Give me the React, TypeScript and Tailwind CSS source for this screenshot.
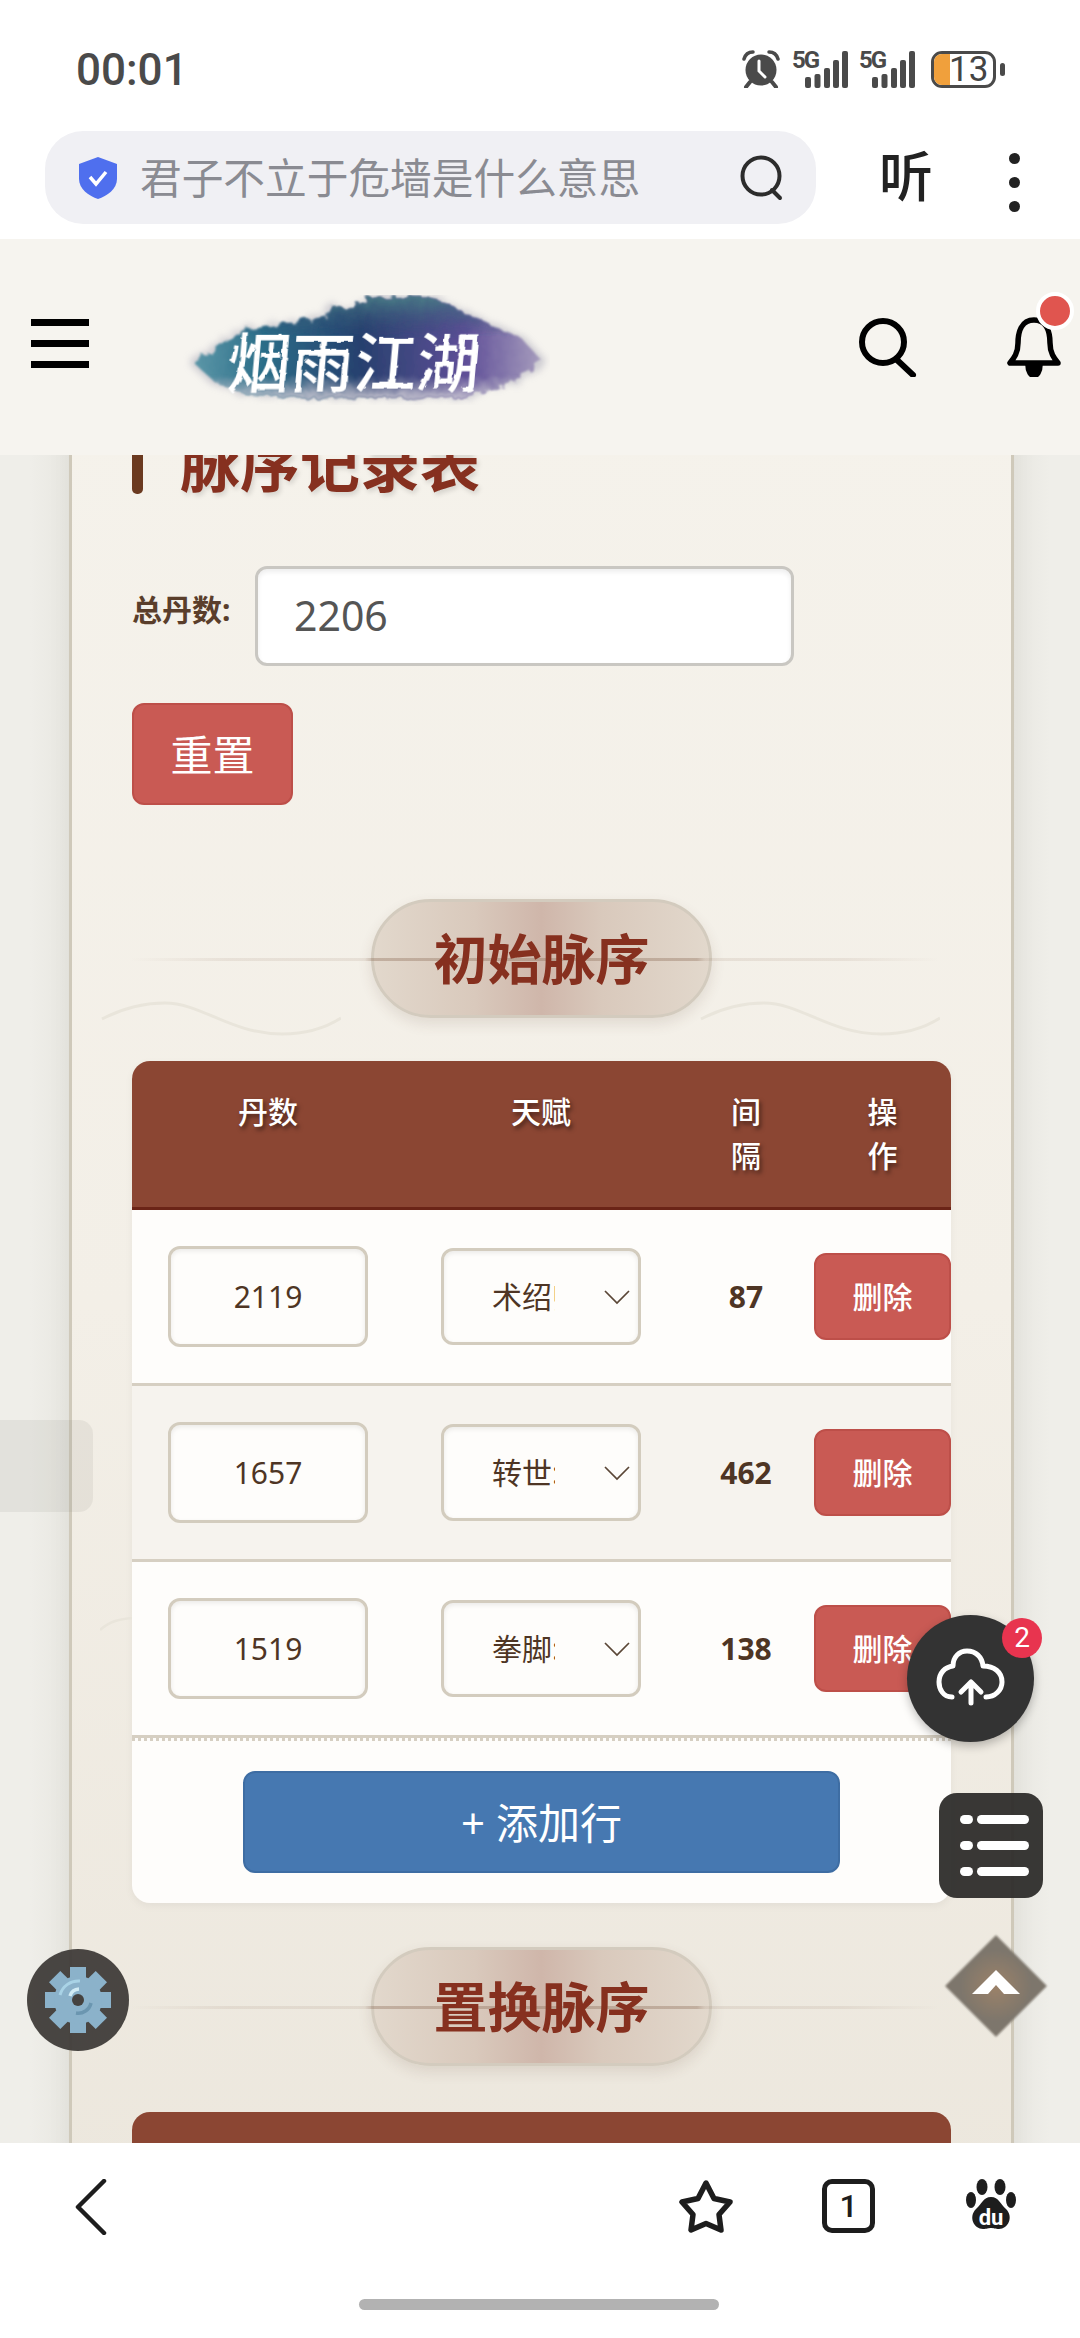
/* ─────────────────────────────────────────────────────
 *  脉序记录表 — pulse order table inside the mobile browser shell.
 *
 *  Browser chrome top and bottom, site header, then a card
 *  with the total input and the editable table sections.
 * ───────────────────────────────────────────────────── */

const ROWS = [
  { dan: '2119', talent: '术绍师', gap: '87' },
  { dan: '1657', talent: '转世:', gap: '462' },
  { dan: '1519', talent: '拳脚:', gap: '138' },
];

/* ── Status bar icons ──────────────────────────────── */

function Signal() {
  return (
    <div className="relative h-[38px] w-[56px]">
      <svg viewBox="0 0 56 38" className="absolute inset-0 h-full w-full" fill="#4a4a4a">
        <rect x="13" y="27" width="6" height="11" rx="2" />
        <rect x="22.5" y="24" width="6" height="14" rx="2" />
        <rect x="32" y="18" width="6" height="20" rx="2" />
        <rect x="41" y="10" width="6" height="28" rx="2" />
        <rect x="50" y="1" width="6" height="37" rx="2" />
      </svg>
      <span className="absolute left-0 top-[-2px] text-[24px] leading-[24px] font-bold tracking-[-2px] text-[#4a4a4a] font-['Roboto',sans-serif]">
        5G
      </span>
    </div>
  );
}

function StatusIcons() {
  return (
    <div className="flex items-center">
      <svg viewBox="0 0 38 38" className="mr-[12px] h-[38px] w-[38px]">
        <circle cx="19" cy="20" r="15.5" fill="#4a4a4a" />
        <path d="M2 9 Q4 2 11 2 M36 9 Q34 2 27 2" stroke="#4a4a4a" strokeWidth="3.5" fill="none" strokeLinecap="round" />
        <path d="M8 32 L4 37 M30 32 L34 37" stroke="#4a4a4a" strokeWidth="4" strokeLinecap="round" />
        <path d="M17 11 V21 L23 27" stroke="#fff" strokeWidth="3" fill="none" strokeLinecap="round" />
      </svg>
      <Signal />
      <div className="w-[11px]" />
      <Signal />
      <div className="ml-[16px] flex h-[37px] w-[65px] items-center rounded-[11px] border-[3px] border-[#4a4a4a]">
        <div className="h-full w-[16px] rounded-l-[8px] bg-[#f0a03c]" />
        <span className="ml-[-1px] text-[35px] leading-[31px] text-[#444] font-['Roboto',sans-serif]">13</span>
      </div>
      <div className="ml-[4px] h-[13px] w-[5px] rounded-full bg-[#4a4a4a]" />
    </div>
  );
}

/* ── Logo: ink wash blot with brush lettering ──────── */

const BLOT =
  'M14 68 L60 36 L122 26 L146 22 L152 10 L172 14 L190 3 L250 2 L272 12 L302 26 L342 44 L362 66 L336 86 L284 102 L200 103 L112 102 L66 99 L36 88 Z';

function Logo() {
  return (
    <svg viewBox="0 0 370 110" className="h-[110px] w-[370px]">
      <defs>
        <linearGradient id="ink" x1="0" y1="0" x2="1" y2="0">
          <stop offset="0" stopColor="#5c97a8" />
          <stop offset="0.2" stopColor="#2b6d88" />
          <stop offset="0.48" stopColor="#27406e" />
          <stop offset="0.78" stopColor="#5f4f98" />
          <stop offset="1" stopColor="#a79dbd" />
        </linearGradient>
        <linearGradient id="inkFade" x1="0" y1="0" x2="0" y2="1">
          <stop offset="0" stopColor="#4a7f86" stopOpacity="0.9" />
          <stop offset="0.4" stopColor="#2a4570" stopOpacity="0" />
          <stop offset="0.78" stopColor="#b7b4c4" stopOpacity="0" />
          <stop offset="1" stopColor="#cfccd6" stopOpacity="0.9" />
        </linearGradient>
        <filter id="haze" x="-15%" y="-30%" width="130%" height="160%">
          <feTurbulence type="fractalNoise" baseFrequency="0.1" numOctaves="3" seed="4" />
          <feDisplacementMap in="SourceGraphic" scale="12" />
          <feGaussianBlur stdDeviation="3.5" />
        </filter>
        <filter id="rough" x="-10%" y="-20%" width="120%" height="140%">
          <feTurbulence type="fractalNoise" baseFrequency="0.11" numOctaves="3" seed="4" />
          <feDisplacementMap in="SourceGraphic" scale="9" />
          <feGaussianBlur stdDeviation="1.1" />
        </filter>
        <filter id="brush" x="-5%" y="-10%" width="110%" height="120%">
          <feTurbulence type="fractalNoise" baseFrequency="0.1" numOctaves="2" seed="8" />
          <feDisplacementMap in="SourceGraphic" scale="3" />
        </filter>
      </defs>
      <path d={BLOT} fill="#bdbcc6" opacity="0.7" filter="url(#haze)" transform="translate(-6 -2) scale(1.03 1.03)" />
      <path d={BLOT} fill="url(#ink)" filter="url(#rough)" />
      <path d={BLOT} fill="url(#inkFade)" filter="url(#rough)" />
      <text
        x="46"
        y="92"
        fill="#fff"
        fontSize="64"
        fontWeight="500"
        textLength="252"
        lengthAdjust="spacingAndGlyphs"
        fontFamily="'Noto Sans CJK SC', sans-serif"
        transform="skewX(-5) translate(8 0)"
        filter="url(#brush)"
      >
        烟雨江湖
      </text>
    </svg>
  );
}

/* ── Section heading: pill over a hairline ─────────── */

function Wave({ className }: { className: string }) {
  return (
    <svg viewBox="0 0 240 36" className={className} fill="none">
      <path d="M1 18 Q32 2 64 2 C100 2 130 33 181 33 Q215 33 240 17" stroke="#e9e5db" strokeWidth="3" />
    </svg>
  );
}

function SectionTitle({ title, waves }: { title: string; waves?: boolean }) {
  return (
    <div className="relative flex justify-center">
      <div className="absolute left-[-2px] right-[11px] top-[59px] z-10 h-[3px] bg-[linear-gradient(90deg,rgba(150,120,100,0),rgba(150,120,100,0.13)_12%,rgba(150,120,100,0.14)_29%,rgba(150,120,100,0.42)_30%,rgba(150,120,100,0.42)_70%,rgba(150,120,100,0.14)_71%,rgba(150,120,100,0.13)_88%,rgba(150,120,100,0))]" />
      {waves && (
        <>
          <Wave className="absolute left-[-31px] top-[102px] h-[36px] w-[240px]" />
          <Wave className="absolute right-[11px] top-[102px] h-[36px] w-[240px]" />
        </>
      )}
      <div className="relative flex h-[119px] w-[341px] items-center justify-center rounded-[60px] border-[3px] border-[#d3cbbe] bg-[linear-gradient(90deg,#e2d8cc,#d9c9bc_30%,#cfb6aa_50%,#d9c9bc_68%,#e2d8cc)] shadow-[0_6px_14px_rgba(90,60,40,0.12)]">
        <span className="relative z-20 text-[54px] leading-none font-bold text-[#86301f]">{title}</span>
      </div>
    </div>
  );
}

/* ── Table ─────────────────────────────────────────── */

function TableHead() {
  const cell = 'text-center text-[30px] leading-[44px] font-medium text-white [text-shadow:2px_3px_4px_rgba(0,0,0,0.5)]';
  return (
    <div className="grid h-[149px] grid-cols-[272px_274px_136px_137px] border-b-[3px] border-[#6b2417] bg-[#8b4633] pt-[29px]">
      <div className={cell}>丹数</div>
      <div className={cell}>天赋</div>
      <div className={cell}>
        间<br />隔
      </div>
      <div className={cell}>
        操<br />作
      </div>
    </div>
  );
}

function TableRow({ row, striped }: { row: (typeof ROWS)[number]; striped: boolean }) {
  return (
    <div
      className={`grid h-[176px] grid-cols-[272px_274px_136px_137px] items-center border-b-[3px] border-[#d6cfc2] ${
        striped ? 'bg-[#f6f3ee]' : 'bg-[#fefdfb]'
      }`}
    >
      <div className="flex justify-center">
        <div className="flex h-[101px] w-[200px] items-center justify-center rounded-[12px] border-[3px] border-[#d3ccbe] bg-[#fefdfb] text-[30px] text-[#4e3524] shadow-[inset_0_2px_5px_rgba(0,0,0,0.08)]">
          {row.dan}
        </div>
      </div>
      <div className="flex justify-center">
        <div className="relative flex h-[97px] w-[200px] items-center rounded-[12px] border-[3px] border-[#d3ccbe] bg-[#fefdfb] pl-[48px] shadow-[inset_0_2px_5px_rgba(0,0,0,0.08)]">
          <span className="w-[63px] overflow-hidden whitespace-nowrap text-[30px] text-[#4e3524]">{row.talent}</span>
          <svg viewBox="0 0 26 16" className="absolute right-[8px] top-[38px] h-[16px] w-[26px]" fill="none">
            <path d="M1 2 L13 14 L25 2" stroke="#5a4636" strokeWidth="1.7" />
          </svg>
        </div>
      </div>
      <div className="text-center text-[30px] font-bold text-[#4e3524]">{row.gap}</div>
      <div className="flex h-[87px] items-center justify-center rounded-[12px] border-[2px] border-[#bd4f49] bg-[#c95a54] text-[30px] font-medium text-white">
        删除
      </div>
    </div>
  );
}

/* ── Floating controls ─────────────────────────────── */

function Gear() {
  const teeth = [0, 45, 90, 135, 180, 225, 270, 315];
  return (
    <svg viewBox="0 0 66 66" className="h-[66px] w-[66px]">
      {teeth.map((a) => (
        <rect key={a} x="25" y="0" width="16" height="16" fill="#8bb2ca" transform={`rotate(${a} 33 33)`} />
      ))}
      <circle cx="33" cy="33" r="24" fill="#8bb2ca" />
      <path d="M15 28 A19 19 0 0 1 35 14" stroke="#a9d3e6" strokeWidth="3" fill="none" />
      <path d="M25 29 A10 10 0 0 1 34 22" stroke="#d2ecf5" strokeWidth="3.5" fill="none" />
      <path d="M46 36 A13 13 0 0 1 31 46" stroke="#6b96b0" strokeWidth="3.5" fill="none" />
      <circle cx="33" cy="33" r="6" fill="#45423f" />
    </svg>
  );
}

function FloatingControls() {
  return (
    <>
      <div className="absolute left-0 top-[1420px] h-[92px] w-[93px] rounded-r-[14px] bg-[rgba(120,120,110,0.1)]" />

      {/* Upload queue */}
      <div className="absolute left-[907px] top-[1615px] h-[127px] w-[127px] rounded-full bg-[#333] shadow-[0_4px_10px_rgba(0,0,0,0.25)]">
        <svg viewBox="0 0 127 127" className="h-full w-full" fill="none" stroke="#fff" strokeWidth="5" strokeLinecap="round" strokeLinejoin="round">
          <path d="M45 82 C36 82 32 74 32 67 C32 58 38 52 46 51 C46 42 52 36 60 36 C69 36 75 42 76 51 C87 51 95 57 95 67 C95 75 88 82 79 82" />
          <path d="M64 88 V68 M54 77 L64 67 L74 77" />
        </svg>
        <div className="absolute right-[-8px] top-[3px] flex h-[40px] w-[40px] items-center justify-center rounded-full bg-[#e8344f] text-[28px] leading-none text-white font-['Roboto',sans-serif]">
          2
        </div>
      </div>

      {/* Outline list */}
      <div className="absolute left-[939px] top-[1793px] flex h-[105px] w-[104px] flex-col justify-center gap-[17px] rounded-[18px] bg-[#2e2d2b]/95 pl-[21px]">
        {[0, 1, 2].map((i) => (
          <div key={i} className="flex items-center gap-[4px]">
            <div className="h-[9px] w-[13px] rounded-full bg-white" />
            <div className="h-[9px] w-[52px] rounded-full bg-white" />
          </div>
        ))}
      </div>

      {/* Back to top */}
      <div className="absolute left-[960px] top-[1950px] h-[72px] w-[72px] rotate-45 bg-[radial-gradient(circle,#9c8269,#7d766c_70%)] blur-[1px]" />
      <svg viewBox="0 0 48 24" className="absolute left-[972px] top-[1970px] h-[24px] w-[48px]" fill="#fff">
        <path d="M0 24 L24 0 L48 24 L32 24 L24 15 L16 24 Z" />
      </svg>

      {/* Settings */}
      <div className="absolute left-[27px] top-[1949px] flex h-[102px] w-[102px] items-center justify-center rounded-full bg-[#3f3c39]/95">
        <Gear />
      </div>
    </>
  );
}

/* ── Page ──────────────────────────────────────────── */

export default function App() {
  return (
    <div className="relative flex h-[2338px] w-[1080px] flex-col overflow-hidden bg-white font-['Noto_Sans','Noto_Sans_CJK_SC',sans-serif]">
      {/* Status bar */}
      <div className="flex h-[131px] shrink-0 items-start justify-between pl-[76px] pr-[75px] pt-[50px]">
        <span className="text-[44px] leading-[40px] font-medium text-[#4a4a4a] font-['Roboto',sans-serif]">00:01</span>
        <StatusIcons />
      </div>

      {/* Browser address row */}
      <div className="flex h-[108px] shrink-0 items-start pl-[45px]">
        <div className="flex h-[93px] w-[771px] items-center rounded-[38px] bg-[#f0f0f4] pl-[34px]">
          <svg viewBox="0 0 38 42" className="h-[42px] w-[38px]">
            <path d="M19 0 L38 7 V22 C38 32 28 39 19 42 C10 39 0 32 0 22 V7 Z" fill="#4f6fee" />
            <path d="M11 20 L17 27 L27 15" stroke="#fff" strokeWidth="3.5" fill="none" />
          </svg>
          <span className="ml-[23px] text-[41.7px] leading-none text-[#8a8b92]">君子不立于危墙是什么意思</span>
          <svg viewBox="0 0 44 46" className="ml-[100px] h-[46px] w-[44px]" fill="none" stroke="#2c2c2c" strokeWidth="4" strokeLinecap="round">
            <circle cx="21" cy="21" r="18.5" />
            <path d="M32 35 L40 43" />
          </svg>
        </div>
        <span className="ml-[63px] mt-[15px] text-[54px] leading-[60px] font-medium text-[#222]">听</span>
        <div className="ml-[76px] mt-[22px] flex flex-col gap-[13px]">
          <div className="h-[11px] w-[11px] rounded-full bg-[#222]" />
          <div className="h-[11px] w-[11px] rounded-full bg-[#222]" />
          <div className="h-[11px] w-[11px] rounded-full bg-[#222]" />
        </div>
      </div>

      {/* Site header */}
      <div className="relative z-10 flex h-[216px] shrink-0 items-start bg-[#f6f4ef]">
        <div className="ml-[31px] mt-[80px] flex w-[58px] flex-col gap-[14px]">
          <div className="h-[7px] bg-black" />
          <div className="h-[7px] bg-black" />
          <div className="h-[7px] bg-black" />
        </div>
        <div className="ml-[91px] mt-[56px]">
          <Logo />
        </div>
        <svg viewBox="0 0 60 60" className="ml-[307px] mt-[78px] h-[60px] w-[60px]" fill="none" stroke="#000" strokeWidth="6" strokeLinecap="round">
          <circle cx="26" cy="25" r="21" />
          <path d="M39 42 L56 58" />
        </svg>
        <svg viewBox="0 0 54 60" className="ml-[90px] mt-[78px] h-[60px] w-[54px]" fill="none" stroke="#000" strokeWidth="5.5" strokeLinejoin="round">
          <path d="M27 3 C14 3 11 16 11 26 C11 36 7 41 3 46 H51 C47 41 43 36 43 26 C43 16 40 3 27 3 Z" />
          <path d="M21 48 C21 62 33 62 33 48 Z" fill="#000" />
        </svg>
        <div className="absolute left-[1036px] top-[53px] h-[38px] w-[38px] rounded-full border-[4px] border-white bg-[#e0554f]" />
      </div>

      {/* Scrolled page */}
      <div className="relative min-h-0 flex-1 overflow-hidden bg-[linear-gradient(90deg,#efeee9_0,#efeee9_30px,#e8e7e1_70px,#e8e7e1_1012px,#efeee9_1050px)]">
        <div className="ml-[69px] mt-[-50px] h-[1800px] w-[945px] border-x-[3px] border-[#cfc9ba] bg-[linear-gradient(180deg,#f5f2eb,#f3efe7_50%,#ece7dd)] pl-[60px] shadow-[0_0_24px_rgba(0,0,0,0.05)]">
          <div className="flex h-[89px] items-end">
            <div className="h-[70px] w-[11px] rounded-b-[5px] bg-[#6b3a20]" />
            <h2 className="ml-[37px] text-[60px] leading-[60px] font-bold text-[#86301f] [text-shadow:2px_3px_5px_rgba(0,0,0,0.13)]">脉序记录表</h2>
          </div>

          <div className="mt-[72px] flex items-start">
            <label className="mt-[26px] w-[123px] text-[30px] leading-[36px] font-bold text-[#5a3e2b]">总丹数:</label>
            <div className="flex h-[100px] w-[539px] items-center rounded-[12px] border-[3px] border-[#c9c7c2] bg-white pl-[36px] text-[41px] text-[#555] shadow-[inset_0_3px_5px_rgba(0,0,0,0.07)]">
              2206
            </div>
          </div>

          <button className="mt-[37px] block h-[102px] w-[161px] rounded-[12px] border-[2px] border-[#bd4f49] bg-[#c95a54] text-[42px] text-white">
            重置
          </button>

          <div className="mt-[94px] w-[819px]">
            <SectionTitle title="初始脉序" waves />
          </div>

          <div className="relative mt-[43px] w-[819px]">
            <svg viewBox="0 0 32 14" className="absolute left-[-32px] top-[556px] h-[14px] w-[32px]" fill="none">
              <path d="M0 13 C10 4 20 2 32 1" stroke="#e9e5db" strokeWidth="2.5" />
            </svg>
            <div className="overflow-hidden rounded-[18px] bg-[#fefdfb] shadow-[0_3px_8px_rgba(0,0,0,0.05)]">
              <TableHead />
              {ROWS.map((row, i) => (
                <TableRow key={row.dan} row={row} striped={i % 2 === 1} />
              ))}
              <div className="border-t-[3px] border-dotted border-[#d6cfc2] px-[111px] pb-[30px] pt-[30px]">
                <button className="block h-[102px] w-[597px] rounded-[12px] border-[2px] border-[#3e6da3] bg-[#4678b1] text-[42px] text-white">
                  + 添加行
                </button>
              </div>
            </div>
          </div>

          <div className="mt-[44px] w-[819px]">
            <SectionTitle title="置换脉序" />
          </div>

          <div className="mt-[46px] h-[148px] w-[819px] rounded-t-[18px] bg-[#8b4633]" />
        </div>
      </div>

      {/* Browser toolbar */}
      <div className="relative z-10 h-[195px] shrink-0 bg-white">
        <div className="flex items-start pl-[75px] pt-[36px]">
          <svg viewBox="0 0 32 56" className="h-[56px] w-[32px]" fill="none" stroke="#1d1d1d" strokeWidth="4.5" strokeLinecap="round" strokeLinejoin="round">
            <path d="M29 2 L3 28 L29 54" />
          </svg>
          <svg viewBox="0 0 58 56" className="ml-[570px] h-[56px] w-[58px]" fill="none" stroke="#1d1d1d" strokeWidth="5.5" strokeLinejoin="round">
            <path d="M29 4 L37 19.5 L53 23 L42 35.5 L44 51 L29 44.5 L14 51 L16 35.5 L5 23 L21 19.5 Z" />
          </svg>
          <div className="ml-[87px] flex h-[54px] w-[53px] items-center justify-center rounded-[10px] border-[5px] border-[#1d1d1d] text-[32px] leading-none font-medium text-[#1d1d1d] font-['Roboto',sans-serif]">
            1
          </div>
          <svg viewBox="0 0 50 52" className="ml-[91px] h-[52px] w-[50px]">
            <ellipse cx="16" cy="8" rx="5.5" ry="8" fill="#1d1d1d" />
            <ellipse cx="34" cy="8" rx="5.5" ry="8" fill="#1d1d1d" />
            <ellipse cx="5" cy="21" rx="5" ry="8" fill="#1d1d1d" />
            <ellipse cx="45" cy="21" rx="5" ry="8" fill="#1d1d1d" />
            <path d="M25 18 C33 18 34 25 40 30 C48 38 42 50 33 50 C29 50 28 49 25 49 C22 49 21 50 17 50 C8 50 2 38 10 30 C16 25 17 18 25 18 Z" fill="#1d1d1d" />
            <text x="25" y="46" textAnchor="middle" fontSize="22" fontWeight="700" fill="#fff" fontFamily="'Roboto', sans-serif">
              du
            </text>
          </svg>
        </div>
        <div className="absolute left-[359px] top-[156px] h-[11px] w-[360px] rounded-full bg-[#b2b2b2]" />
      </div>

      <FloatingControls />
    </div>
  );
}
